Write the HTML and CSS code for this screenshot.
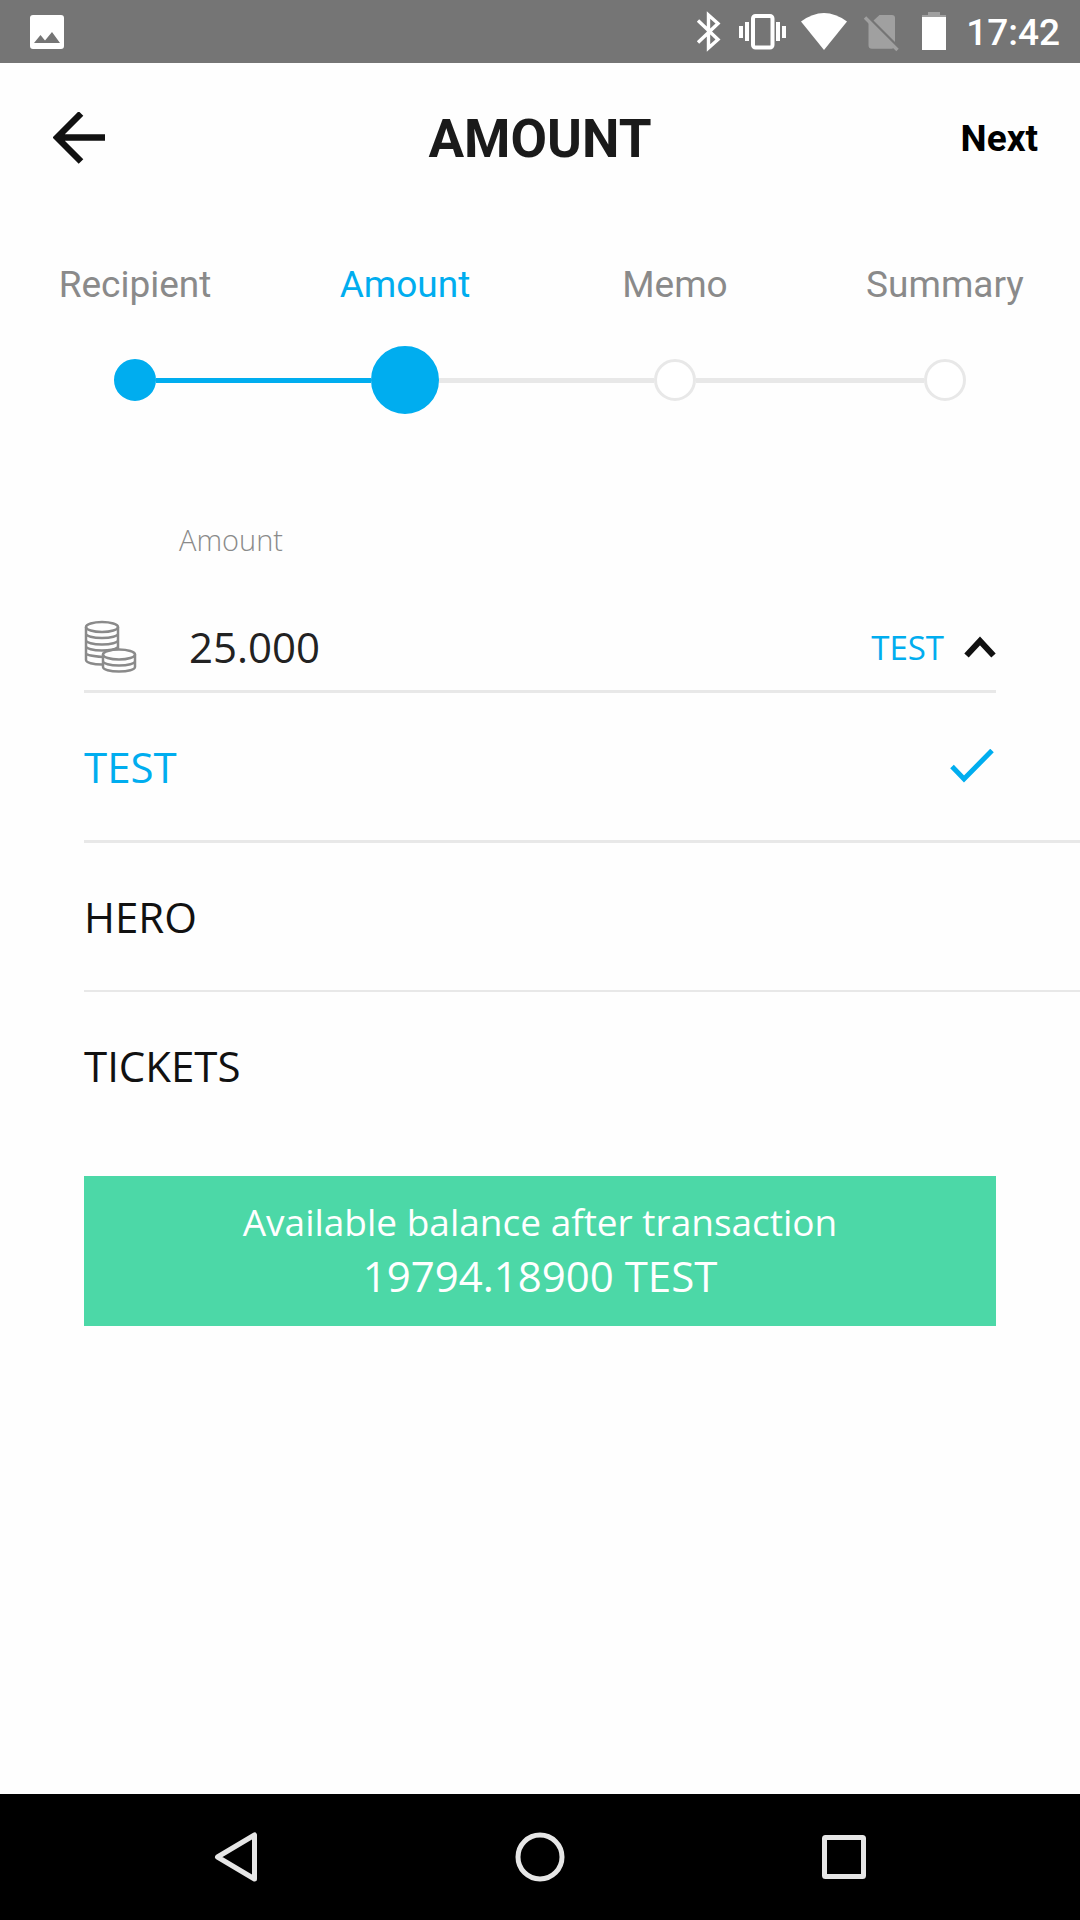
FILE: index.html
```html
<!DOCTYPE html>
<html lang="en">
<head>
<meta charset="utf-8">
<meta name="viewport" content="width=device-width, initial-scale=1">
<title>Amount</title>
<link rel="stylesheet" href="styles.css">
</head>
<body>
<div class="screen">
  <div class="status-bar">
    <svg class="status-photo" width="36" height="36" viewBox="0 0 36 36" aria-hidden="true"><path fill="#fff" fill-rule="evenodd" d="M4 1h28a3 3 0 0 1 3 3v28a3 3 0 0 1-3 3H4a3 3 0 0 1-3-3V4a3 3 0 0 1 3-3zM5 29h26l-8-11-7 8.500-4.500-5.500z"/></svg>
    <svg class="status-icons" width="252" height="42" viewBox="695 11 252 42" aria-hidden="true">
      <path fill="none" stroke="#fff" stroke-width="3.400" d="M698 20.500l20 19-9.500 8.500V15l9.500 8.500-20 19"/>
      <rect x="753" y="16" width="19.500" height="31.500" rx="2.500" fill="none" stroke="#fff" stroke-width="4"/>
      <path fill="#fff" d="M739 26h4v12h-4zM745 22h4v19h-4zM776 22h4v19h-4zM782 26h4v12h-4z"/>
      <path fill="#fff" d="M801 21.500Q824 4.500 847 21.500L824 50z"/>
      <path fill="#a0a0a0" d="M879.500 15H892a3 3 0 0 1 3 3v24L873.500 20.500zM868.500 21L894 47.500a3 3 0 0 1-2 1.300H872a3.500 3.500 0 0 1-3.500-3.500z"/>
      <path stroke="#a0a0a0" stroke-width="3.400" d="M865 17.500l32.500 32.500"/>
      <path fill="#a0a0a0" d="M928 12h12v3h6v3h-24v-3h6z"/>
      <path fill="#fff" d="M922 17h24v33h-24z"/>
    </svg>
    <time class="clock">17:42</time>
  </div>

  <header class="header">
    <button class="back" type="button" aria-label="Back">
      <svg width="52" height="54" viewBox="0 0 52 54" aria-hidden="true"><path fill="none" stroke="#111" stroke-width="6.500" d="M52 25.500H5M28 1.500L4 25.500l24 24"/></svg>
    </button>
    <h1 class="title">AMOUNT</h1>
    <button class="next" type="button">Next</button>
  </header>

  <ol class="stepper">
    <li class="step step-done"><span class="step-label">Recipient</span><span class="track"><span class="dot"></span></span></li>
    <li class="step step-current" aria-current="step"><span class="step-label">Amount</span><span class="track"><span class="dot"></span></span></li>
    <li class="step"><span class="step-label">Memo</span><span class="track"><span class="dot"></span></span></li>
    <li class="step"><span class="step-label">Summary</span><span class="track"><span class="dot"></span></span></li>
  </ol>

  <main class="form">
    <label class="amount-label" for="amount">Amount</label>
    <div class="amount-row">
      <svg class="coins" width="54" height="54" viewBox="0 0 54 54" fill="none" stroke="#8a8a8a" stroke-width="2.500" aria-hidden="true">
        <ellipse cx="18" cy="7" rx="16" ry="5"/>
        <path d="M2 7v33c0 2.500 7 4.500 16 4.500M34 7v22M2 13.500c0 2.500 7 4.500 16 4.500s16-2 16-4.500M2 20c0 2.500 7 4.500 16 4.500s16-2 16-4.500M2 26c0 2.500 7 4.500 16 4.500 7 0 13-1 15.500-3M2 33c0 2 7 3.500 17 4"/>
        <ellipse cx="35" cy="34.500" rx="16" ry="5"/>
        <path d="M19 34.500V47c0 2.500 7 4.500 16 4.500s16-2 16-4.500V34.500M19 41c0 2.500 7 4.500 16 4.500s16-2 16-4.500"/>
      </svg>
      <input class="amount-input" id="amount" type="text" inputmode="decimal" value="25.000">
      <button class="currency" type="button" aria-expanded="true" aria-controls="currencies">TEST
        <svg width="32" height="22" viewBox="0 0 32 22" aria-hidden="true"><path fill="none" stroke="#111" stroke-width="6" d="M2.500 19.500L16 5l13.500 14.500"/></svg>
      </button>
    </div>
    <ul class="options" id="currencies">
      <li class="option-item"><button class="option option-selected" type="button" aria-pressed="true">TEST
        <svg class="check" width="44" height="36" viewBox="0 0 44 36" aria-hidden="true"><path fill="none" stroke="#00adef" stroke-width="5" d="M2 17.500l12 12.500L42 1.500"/></svg>
      </button></li>
      <li class="option-item"><button class="option" type="button" aria-pressed="false">HERO</button></li>
      <li class="option-item"><button class="option" type="button" aria-pressed="false">TICKETS</button></li>
    </ul>
    <div class="balance">
      <p class="balance-label">Available balance after transaction</p>
      <p class="balance-value">19794.18900 TEST</p>
    </div>
  </main>

  <nav class="nav-bar">
    <button class="nav-button" type="button" aria-label="Back"><svg width="50" height="50" viewBox="0 0 50 50" aria-hidden="true"><path fill="none" stroke="#e6e6e6" stroke-width="5" stroke-linejoin="round" d="M43.500 3v44L6.500 25z"/></svg></button>
    <button class="nav-button" type="button" aria-label="Home"><svg width="50" height="50" viewBox="0 0 50 50" aria-hidden="true"><circle cx="25" cy="25" r="22" fill="none" stroke="#e6e6e6" stroke-width="5"/></svg></button>
    <button class="nav-button" type="button" aria-label="Recent apps"><svg width="50" height="50" viewBox="0 0 50 50" aria-hidden="true"><rect x="5.500" y="5.500" width="39" height="39" rx="1" fill="none" stroke="#e6e6e6" stroke-width="5"/></svg></button>
  </nav>
</div>
</body>
</html>
```
FILE: styles.css
```css
* {
  box-sizing: border-box;
}

body {
  margin: 0;
  background: #fefefe;
  color: #111;
  font-family: "Open Sans", sans-serif;
}

button,
input {
  margin: 0;
  padding: 0;
  border: 0;
  background: none;
  color: inherit;
  font: inherit;
}

svg {
  display: block;
  flex: none;
}

.screen {
  display: flex;
  flex-direction: column;
  min-height: 100vh;
}

.status-bar {
  display: flex;
  align-items: center;
  height: 63px;
  padding: 0 20px 0 29px;
  background: #757575;
  color: #fff;
}

.status-icons {
  margin-left: auto;
}

.clock {
  margin-left: 19px;
  padding-top: 2px;
  font: 500 37px/44px Roboto, sans-serif;
}

.header {
  display: grid;
  grid-template-columns: 1fr auto 1fr;
  align-items: center;
  height: 151px;
  padding: 0 42px;
  font-family: Roboto, sans-serif;
}

.back {
  justify-self: start;
  padding-left: 11px;
}

.title {
  margin: 0;
  color: #1a1a1a;
  font-size: 53px;
  font-weight: 700;
  line-height: 60px;
}

.next {
  justify-self: end;
  color: #000;
  font-size: 37px;
  font-weight: 700;
}

.stepper {
  display: grid;
  grid-template-columns: repeat(4, 1fr);
  margin: 0;
  padding: 48px 0 0;
  list-style: none;
  font-family: Roboto, sans-serif;
}

.step {
  display: flex;
  flex-direction: column;
  gap: 38px;
  text-align: center;
}

.step-label {
  color: #8a8a8a;
  font-size: 37px;
  line-height: 46px;
}

/* Each half of the rail shows the state of the segment it belongs to. */
.track {
  display: flex;
  align-items: center;
  height: 68px;
}

.track::before,
.track::after {
  content: "";
  flex: 1;
  height: 5px;
  background: #e8e8e8;
}

.step:first-child .track::before,
.step:last-child .track::after {
  background: none;
}

.dot {
  width: 42px;
  height: 42px;
  border: 3px solid #e8e8e8;
  border-radius: 50%;
  background: #fff;
}

.step-current .step-label {
  color: #00adef;
}

.step-done .dot,
.step-current .dot {
  border-color: #00adef;
  background: #00adef;
}

.step-current .dot {
  width: 68px;
  height: 68px;
}

.step-done .track::after,
.step-current .track::before {
  background: #00adef;
}

.form {
  display: flex;
  flex: 1;
  flex-direction: column;
  padding: 104px 84px 0;
}

.amount-label {
  padding-left: 95px;
  color: #8a8a8a;
  font-size: 29px;
  font-weight: 300;
  line-height: 44px;
}

.amount-row {
  display: flex;
  align-items: center;
  height: 131px;
  padding-top: 42px;
  border-bottom: 3px solid #e8e8e8;
}

.amount-input {
  flex: 1;
  min-width: 0;
  margin-left: 51px;
  color: #222;
  font-size: 42px;
  line-height: 58px;
}

.currency {
  display: flex;
  align-items: center;
  gap: 20px;
  color: #00adef;
  font-size: 33px;
}

.options {
  margin: 0 -84px 0 0;
  padding: 0;
  list-style: none;
}

.option-item + .option-item {
  border-top: 3px solid #e8e8e8;
}

.option-item + .option-item:last-child {
  border-top-width: 2px;
}

.option {
  display: flex;
  align-items: center;
  justify-content: space-between;
  width: 100%;
  height: 147px;
  padding-right: 86px;
  font-size: 42px;
  text-align: left;
}

.option-selected {
  color: #00adef;
}

.balance {
  margin-top: 37px;
  padding: 19px 24px 23px;
  background: #4cd8a7;
  color: #fff;
  text-align: center;
}

.balance-label,
.balance-value {
  margin: 0;
  line-height: 54px;
}

.balance-label {
  font-size: 37px;
}

.balance-value {
  font-size: 42px;
}

.nav-bar {
  display: grid;
  grid-template-columns: repeat(3, 1fr);
  height: 126px;
  padding: 0 84px;
  background: #000;
}

.nav-button {
  display: flex;
  align-items: center;
  justify-content: center;
}
```
